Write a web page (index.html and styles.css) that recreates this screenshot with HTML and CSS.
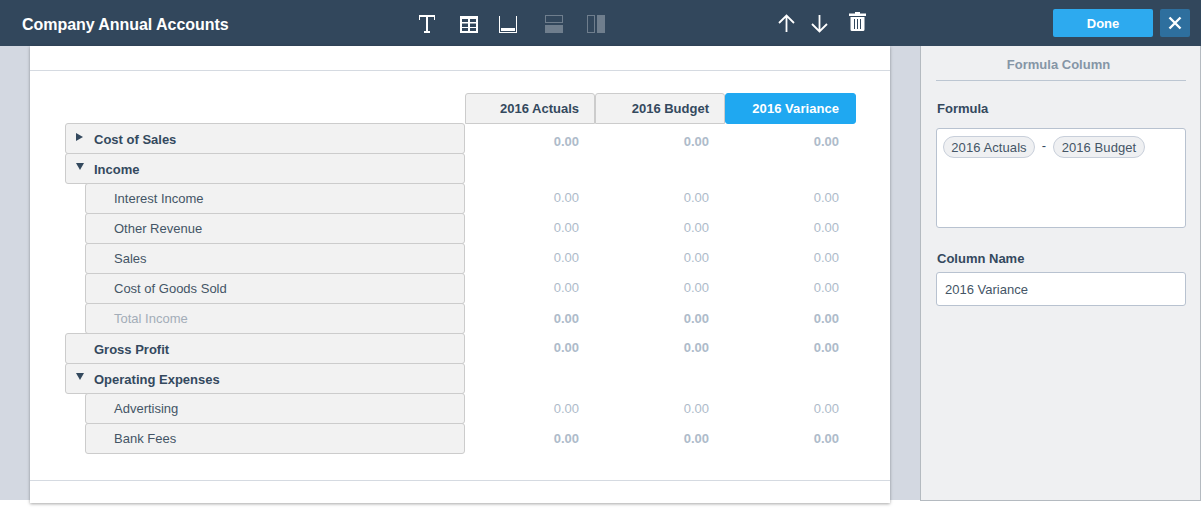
FILE: index.html
```html
<!DOCTYPE html>
<html lang="en">
<head>
  <meta charset="UTF-8" />
  <title>Company Annual Accounts</title>
  <meta name="viewport" content="width=device-width, initial-scale=1.0" />
  <link rel="stylesheet" href="styles.css">
</head>
<body>

  <header class="topbar">
    <h1 class="title">Company Annual Accounts</h1>

    <div class="tools">
      <svg class="icon icon-text" width="21" height="18" viewBox="0 0 21 18">
        <path fill="#fff" d="M1 0h16v5h-1V2H10v14h2v2H6v-2h2V2H2v3H1z"/>
      </svg>
      <svg class="icon icon-table" width="18" height="17" viewBox="0 0 18 17">
        <path fill="#fff" fill-rule="evenodd" d="M0 0h18v17H0zM2 3v3h6V3zm8 0v3h6V3zM2 7.500V11h6V7.500zm8 0V11h6V7.500zM2 12v3h6v-3zm8 0v3h6v-3z"/>
      </svg>
      <svg class="icon icon-footer" width="18" height="17" viewBox="0 0 18 17">
        <path fill="#fff" d="M0 0h1v16h16V0h1v17H0zM2 12h14v3H2z"/>
      </svg>
      <svg class="icon icon-rows" width="18" height="18" viewBox="0 0 18 18">
        <path fill="#fff" opacity=".3" fill-rule="evenodd" d="M0 0h18v8H0zM1 1v6h16V1zM0 10h18v8H0z"/>
      </svg>
      <svg class="icon icon-cols" width="18" height="18" viewBox="0 0 18 18">
        <path fill="#fff" opacity=".3" fill-rule="evenodd" d="M0 0h8v18H0zM1 1v16h6V1zM10 0h8v18h-8z"/>
      </svg>
    </div>

    <div class="moves">
      <svg class="icon" width="17" height="18" viewBox="0 0 17 18">
        <path fill="none" stroke="#fff" stroke-width="1.800" d="M8.500 18V1.500M1 9L8.500 1.500L16 9"/>
      </svg>
      <svg class="icon icon-down" width="17" height="18" viewBox="0 0 17 18">
        <path fill="none" stroke="#fff" stroke-width="1.800" d="M8.500 0v16.500M1 9L8.500 16.500L16 9"/>
      </svg>
      <svg class="icon icon-trash" width="17" height="19" viewBox="0 0 17 19">
        <path fill="#fff" fill-rule="evenodd" d="M6 0h5v1.500h6V4H0V1.500h6zM1.500 5h14v12.500q0 1.500-1.500 1.500H3q-1.500 0-1.500-1.500zM5 7v10h1V7zM8 7v10h1V7zM11 7v10h1V7z"/>
      </svg>
    </div>

    <button class="btn-done">Done</button>
    <button class="btn-close">
      <svg width="14" height="14" viewBox="0 0 14 14">
        <path fill="none" stroke="#fff" stroke-width="2.400" d="M1.500 1.500l11 11M12.500 1.500l-11 11"/>
      </svg>
    </button>
  </header>

  <div class="workspace">
    <main class="sheet">
      <div class="sheet-body">
        <div class="table">
          <div class="row heads">
            <div class="spacer"></div>
            <div class="head">2016 Actuals</div>
            <div class="head">2016 Budget</div>
            <div class="head active">2016 Variance</div>
          </div>

          <div class="row">
            <div class="label group"><span class="arrow right"></span>Cost of Sales</div>
            <div class="val bold up">0.00</div><div class="val bold up">0.00</div><div class="val bold up">0.00</div>
          </div>
          <div class="row">
            <div class="label group"><span class="arrow down"></span>Income</div>
          </div>
          <div class="row">
            <div class="label child">Interest Income</div>
            <div class="val">0.00</div><div class="val">0.00</div><div class="val">0.00</div>
          </div>
          <div class="row">
            <div class="label child">Other Revenue</div>
            <div class="val">0.00</div><div class="val">0.00</div><div class="val">0.00</div>
          </div>
          <div class="row">
            <div class="label child">Sales</div>
            <div class="val">0.00</div><div class="val">0.00</div><div class="val">0.00</div>
          </div>
          <div class="row">
            <div class="label child">Cost of Goods Sold</div>
            <div class="val">0.00</div><div class="val">0.00</div><div class="val">0.00</div>
          </div>
          <div class="row">
            <div class="label child muted">Total Income</div>
            <div class="val bold low">0.00</div><div class="val bold low">0.00</div><div class="val bold low">0.00</div>
          </div>
          <div class="row">
            <div class="label group">Gross Profit</div>
            <div class="val bold">0.00</div><div class="val bold">0.00</div><div class="val bold">0.00</div>
          </div>
          <div class="row">
            <div class="label group"><span class="arrow down"></span>Operating Expenses</div>
          </div>
          <div class="row">
            <div class="label child">Advertising</div>
            <div class="val low">0.00</div><div class="val low">0.00</div><div class="val low">0.00</div>
          </div>
          <div class="row">
            <div class="label child">Bank Fees</div>
            <div class="val bold low">0.00</div><div class="val bold low">0.00</div><div class="val bold low">0.00</div>
          </div>
        </div>
      </div>
    </main>

    <aside class="panel">
      <h2 class="panel-title">Formula Column</h2>
      <label class="field-label">Formula</label>
      <div class="formula">
        <span class="pill">2016 Actuals</span>
        <span class="op">-</span>
        <span class="pill">2016 Budget</span>
      </div>
      <label class="field-label name-label">Column Name</label>
      <input class="name-input" type="text" value="2016 Variance" />
    </aside>
  </div>

</body>
</html>
```

FILE: styles.css
```css
* {
  box-sizing: border-box;
}
body {
  margin: 0;
  height: 508px;
  overflow: hidden;
  background: #fff;
  font-family: "Liberation Sans", Arial, sans-serif;
  color: #34495e;
}

/* top bar */
.topbar {
  height: 46px;
  background: #32475c;
  display: flex;
  align-items: center;
  padding-left: 22px;
}
.title {
  width: 396px;
  margin: 3px 0 0;
  font-size: 16px;
  font-weight: bold;
  letter-spacing: -0.05px;
  color: #fff;
}
.tools, .moves {
  display: flex;
  align-items: center;
}
.tools {
  width: 360px;
  padding-top: 2px;
}
.moves {
  width: 275px;
}
.icon {
  display: block;
  margin-right: 16px;
}
.icon-text {
  margin-right: 21px;
}
.icon-table {
  margin-right: 21px;
}
.icon-footer {
  margin-right: 28px;
}
.icon-rows {
  margin-right: 24px;
}
.icon-down {
  margin-right: 21px;
  margin-top: 1px;
}
.icon-trash {
  margin-bottom: 3px;
}
.btn-done {
  width: 100px;
  height: 28px;
  border: none;
  border-radius: 2px;
  background: #2daaef;
  color: #fff;
  font-family: inherit;
  font-size: 13px;
  font-weight: bold;
}
.btn-close {
  width: 30px;
  height: 28px;
  margin-left: 7px;
  padding: 0;
  border: none;
  border-radius: 2px;
  background: #2e6f9e;
  display: flex;
  align-items: center;
  justify-content: center;
}

/* canvas */
.workspace {
  height: 454px;
  background: #d3d8e1;
  display: flex;
  padding-left: 30px;
}
.sheet {
  width: 860px;
  height: 457px;
  background: #fff;
  box-shadow: 0 1px 3px rgba(0, 0, 0, 0.35);
  padding: 24px 0 22px;
}
.sheet-body {
  height: 411px;
  border-top: 1px solid #d5dae1;
  border-bottom: 1px solid #d5dae1;
  padding: 22px 0 0 35px;
}
.row {
  display: flex;
  height: 30px;
}
.spacer {
  width: 400px;
}
.head {
  width: 130px;
  height: 31px;
  line-height: 29px;
  padding-right: 15px;
  text-align: right;
  font-size: 13px;
  font-weight: bold;
  background: #f2f2f2;
  border: 1px solid #ccc;
  border-radius: 3px 3px 0 0;
}
.head.active {
  width: 131px;
  padding-right: 16px;
  letter-spacing: 0.05px;
  background: #1fa8f1;
  border-color: #1fa8f1;
  color: #fff;
  border-radius: 3px;
}
.label {
  width: 400px;
  height: 31px;
  line-height: 29px;
  font-size: 13px;
  background: #f2f2f2;
  border: 1px solid #ccc;
  border-radius: 3px;
  position: relative;
}
.group {
  padding-left: 28px;
  line-height: 31px;
  font-weight: bold;
}
.child {
  margin-left: 20px;
  width: 380px;
  padding-left: 28px;
  color: #445566;
}
.muted {
  color: #a3adb8;
}
.arrow {
  position: absolute;
  left: 10px;
  top: 9px;
  width: 0;
  height: 0;
}
.arrow.right {
  border-left: 7px solid #34495e;
  border-top: 4px solid transparent;
  border-bottom: 4px solid transparent;
}
.arrow.down {
  border-top: 7px solid #34495e;
  border-left: 4px solid transparent;
  border-right: 4px solid transparent;
}
.val {
  width: 130px;
  padding-right: 16px;
  text-align: right;
  font-size: 13px;
  line-height: 30px;
  color: #aebbca;
}
.val.bold {
  font-weight: bold;
}
.val.up {
  line-height: 38px;
}
.val.low {
  line-height: 32px;
}

/* side panel */
.panel {
  width: 281px;
  height: 455px;
  margin-left: 30px;
  background: #eff0f2;
  border: 1px solid #b4bac0;
  border-top: none;
  padding: 0 14px 0 15px;
}
.panel-title {
  height: 35px;
  margin: 0;
  padding-right: 5px;
  line-height: 37px;
  text-align: center;
  font-size: 13px;
  font-weight: bold;
  color: #8595a6;
  border-bottom: 1px solid #bcc6d2;
}
.field-label {
  display: block;
  margin-top: 20px;
  padding-left: 1px;
  font-size: 13px;
  font-weight: bold;
  line-height: 15px;
}
.name-label {
  margin-top: 23px;
}
.formula {
  height: 100px;
  margin-top: 12px;
  padding: 7px 6px;
  background: #fff;
  border: 1px solid #b8c2d0;
  border-radius: 3px;
  display: flex;
  align-items: flex-start;
}
.pill {
  width: 92px;
  height: 22px;
  line-height: 22px;
  text-align: center;
  font-size: 13px;
  letter-spacing: 0.08px;
  color: #445566;
  background: #eff0f2;
  border: 1px solid #c8cfda;
  border-radius: 11px;
}
.op {
  width: 18px;
  text-align: center;
  font-size: 13px;
  line-height: 20px;
}
.name-input {
  display: block;
  width: 100%;
  height: 34px;
  margin-top: 6px;
  padding: 0 8px;
  font-family: inherit;
  font-size: 13px;
  color: #445566;
  background: #fff;
  border: 1px solid #b8c2d0;
  border-radius: 3px;
}
```
